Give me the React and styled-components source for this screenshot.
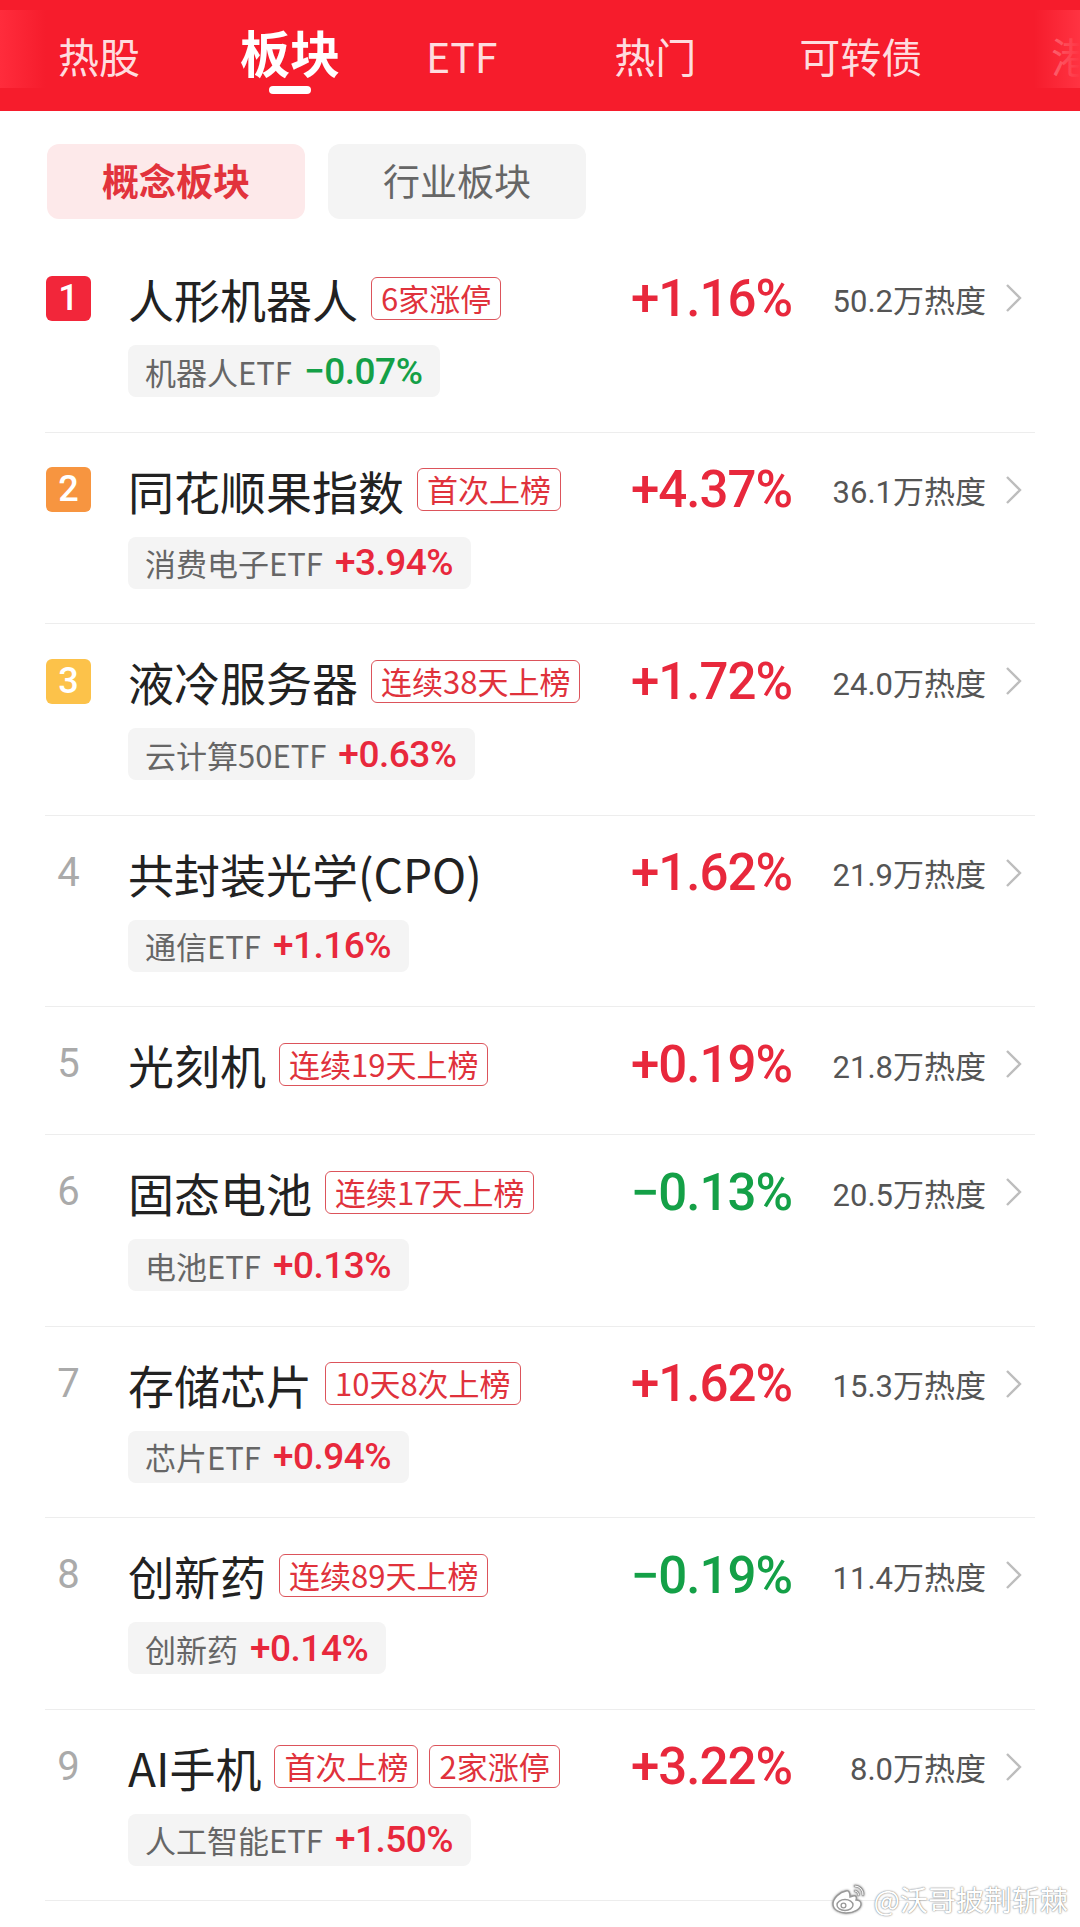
import React from 'react'
import styled, { createGlobalStyle } from 'styled-components';

const GlobalStyle = createGlobalStyle`
  body {
    margin: 0;
    background: #fff;
    font-family: "Noto Sans CJK SC", "Noto Sans", sans-serif;
  }
`;

const Page = styled.div`
  position: relative;
  width: 1080px;
  height: 1927px;
  overflow: hidden;
  background: #fff;
`;

const Header = styled.header`
  position: relative;
  height: 111px;
  box-sizing: border-box;
  background: #f61c2c;
  display: flex;
  align-items: flex-end;
  padding: 0 0 35px 58px;
  &::before, &::after {
    content: '';
    position: absolute;
    top: 10px;
    bottom: 23px;
    width: 46px;
  }
  &::before {
    left: 0;
    background: linear-gradient(90deg, #ff2c3c, rgba(255, 44, 60, 0));
  }
  &::after {
    right: 0;
    background: linear-gradient(270deg, #ff3342, rgba(255, 44, 60, 0));
  }
`;

const Tab = styled.div`
  position: relative;
  flex-shrink: 0;
  line-height: 1;
  white-space: nowrap;
  margin-left: ${p => p.$ml}px;
  font-size: ${p => (p.$active ? 50 : 41)}px;
  font-weight: ${p => (p.$active ? 700 : 400)};
  color: ${p => (p.$active ? '#fff' : p.$faded ? 'rgba(255,255,255,0.45)' : 'rgba(255,240,242,0.92)')};
  &::after {
    content: '';
    display: ${p => (p.$active ? 'block' : 'none')};
    position: absolute;
    left: 50%;
    top: calc(100% + 10px);
    transform: translateX(-50%);
    width: 42px;
    height: 8px;
    border-radius: 4px;
    background: #fff;
  }
`;

const SubTabs = styled.div`
  display: flex;
  gap: 23px;
  padding: 33px 45px 0 47px;
`;

const SubTab = styled.div`
  width: 258px;
  height: 75px;
  box-sizing: border-box;
  padding-bottom: 4px;
  border-radius: 12px;
  display: flex;
  align-items: center;
  justify-content: center;
  font-size: 37px;
  font-weight: ${p => (p.$active ? 700 : 400)};
  color: ${p => (p.$active ? '#e2333c' : '#666')};
  background: ${p => (p.$active ? '#fde9ea' : '#f4f4f4')};
`;

const List = styled.div`
  margin-top: 22px;
  padding: 0 45px;
`;

const Row = styled.div`
  padding: 27px 0 ${p => (p.$chip ? 34.5 : 40)}px;
  border-bottom: 1px solid #ededed;
`;

const TopLine = styled.div`
  display: flex;
  align-items: center;
  height: 60px;
`;

const RankCell = styled.div`
  width: 47px;
  margin-right: 36px;
  display: flex;
  justify-content: center;
  flex-shrink: 0;
`;

const Badge = styled.div`
  width: 45px;
  height: 45px;
  border-radius: 6px;
  background: ${p => p.$bg};
  color: #fff;
  font-family: Roboto, sans-serif;
  font-weight: 500;
  font-size: 36px;
  line-height: 45px;
  text-align: center;
`;

const RankNum = styled.div`
  font-family: Roboto, sans-serif;
  font-size: 40px;
  color: #aaa;
  line-height: 1;
`;

const TitleWrap = styled.div`
  flex: 1;
  display: flex;
  align-items: center;
  min-width: 0;
`;

const Title = styled.div`
  font-size: 46px;
  color: #222;
  line-height: 1;
  white-space: nowrap;
  margin-right: 13px;
`;

const Tag = styled.div`
  height: 43px;
  box-sizing: border-box;
  padding: 0 9px;
  border: 1.5px solid #dc545b;
  border-radius: 6px;
  color: #e0323c;
  font-size: 31px;
  line-height: 40px;
  white-space: nowrap;
  & + & {
    margin-left: 11px;
  }
`;

const Pct = styled.div`
  font-family: Roboto, sans-serif;
  font-weight: 500;
  font-size: 51px;
  letter-spacing: -1px;
  line-height: 1;
  color: ${p => (p.$up ? '#e8283c' : '#14a047')};
  white-space: nowrap;
`;

const Heat = styled.div`
  width: 194px;
  flex-shrink: 0;
  text-align: right;
  font-family: Roboto, "Noto Sans CJK SC", sans-serif;
  font-size: 31px;
  color: #555;
  white-space: nowrap;
`;

const Chevron = styled.svg`
  width: 18px;
  height: 30px;
  margin: 0 12px 0 19px;
  flex-shrink: 0;
`;

const Chip = styled.div`
  display: inline-flex;
  align-items: center;
  height: 52px;
  margin: 17px 0 0 83px;
  padding: 0 18px 0 17px;
  border-radius: 8px;
  background: #f4f4f4;
`;

const ChipLabel = styled.span`
  font-size: 31px;
  color: #666;
`;

const ChipValue = styled.span`
  margin-left: 12px;
  font-family: Roboto, sans-serif;
  font-weight: 500;
  font-size: 37px;
  letter-spacing: -0.5px;
  color: ${p => (p.$up ? '#e8283c' : '#14a047')};
`;

const Watermark = styled.div`
  position: absolute;
  right: 12px;
  bottom: 8px;
  display: flex;
  align-items: center;
  gap: 6px;
  font-size: 28px;
  color: #fff;
  text-shadow: 0 0 2px rgba(0, 0, 0, 0.45), 0 0 1px rgba(0, 0, 0, 0.35);
`;

const tabs = [
  { label: '热股', ml: 0 },
  { label: '板块', ml: 100, active: true },
  { label: 'ETF', ml: 86 },
  { label: '热门', ml: 117 },
  { label: '可转债', ml: 103 },
  { label: '港', ml: 129, faded: true },
];

const badgeColors = { 1: '#f2263a', 2: '#f79540', 3: '#fcc24a' };

const rows = [
  { rank: 1, name: '人形机器人', tags: ['6家涨停'], pct: '+1.16%', heat: '50.2万热度', etf: '机器人ETF', etfPct: '−0.07%' },
  { rank: 2, name: '同花顺果指数', tags: ['首次上榜'], pct: '+4.37%', heat: '36.1万热度', etf: '消费电子ETF', etfPct: '+3.94%' },
  { rank: 3, name: '液冷服务器', tags: ['连续38天上榜'], pct: '+1.72%', heat: '24.0万热度', etf: '云计算50ETF', etfPct: '+0.63%' },
  { rank: 4, name: '共封装光学(CPO)', tags: [], pct: '+1.62%', heat: '21.9万热度', etf: '通信ETF', etfPct: '+1.16%' },
  { rank: 5, name: '光刻机', tags: ['连续19天上榜'], pct: '+0.19%', heat: '21.8万热度' },
  { rank: 6, name: '固态电池', tags: ['连续17天上榜'], pct: '−0.13%', heat: '20.5万热度', etf: '电池ETF', etfPct: '+0.13%' },
  { rank: 7, name: '存储芯片', tags: ['10天8次上榜'], pct: '+1.62%', heat: '15.3万热度', etf: '芯片ETF', etfPct: '+0.94%' },
  { rank: 8, name: '创新药', tags: ['连续89天上榜'], pct: '−0.19%', heat: '11.4万热度', etf: '创新药', etfPct: '+0.14%' },
  { rank: 9, name: 'AI手机', tags: ['首次上榜', '2家涨停'], pct: '+3.22%', heat: '8.0万热度', etf: '人工智能ETF', etfPct: '+1.50%' },
];

const WeiboLogo = () => (
  <svg width="38" height="34" viewBox="0 0 38 34" style={{ filter: 'drop-shadow(0 0 1px rgba(0,0,0,0.5))' }}>
    <path d="M16 9c-6 1-13 7-13 13 0 6 7 9 13 9 8 0 15-4 15-9 0-3-3-4-5-4 1-3 0-5-3-4l-3 1c0-4-1-7-4-6z" fill="#fff" stroke="#999" strokeWidth="1.4" />
    <ellipse cx="15" cy="23" rx="8" ry="5.5" fill="#fff" stroke="#999" strokeWidth="1.4" />
    <circle cx="13.5" cy="23.5" r="2.4" fill="#fff" stroke="#999" strokeWidth="1.3" />
    <path d="M25 4a8 8 0 0 1 8 9" fill="none" stroke="#999" strokeWidth="2.6" strokeLinecap="round" />
    <path d="M25 4a8 8 0 0 1 8 9" fill="none" stroke="#fff" strokeWidth="1" strokeLinecap="round" />
    <path d="M25 9a3.5 3.5 0 0 1 3.5 4" fill="none" stroke="#999" strokeWidth="2.4" strokeLinecap="round" />
    <path d="M25 9a3.5 3.5 0 0 1 3.5 4" fill="none" stroke="#fff" strokeWidth="0.9" strokeLinecap="round" />
  </svg>
);

const App = () => {
  return (
    <Page>
      <GlobalStyle />
      <Header>
        {tabs.map(t => (
          <Tab key={t.label} $ml={t.ml} $active={t.active} $faded={t.faded}>{t.label}</Tab>
        ))}
      </Header>

      <SubTabs>
        <SubTab $active>概念板块</SubTab>
        <SubTab>行业板块</SubTab>
      </SubTabs>

      <List>
        {rows.map(r => (
          <Row key={r.rank} $chip={!!r.etf}>
            <TopLine>
              <RankCell>
                {badgeColors[r.rank]
                  ? <Badge $bg={badgeColors[r.rank]}>{r.rank}</Badge>
                  : <RankNum>{r.rank}</RankNum>}
              </RankCell>
              <TitleWrap>
                <Title>{r.name}</Title>
                {r.tags.map(tag => <Tag key={tag}>{tag}</Tag>)}
              </TitleWrap>
              <Pct $up={r.pct.startsWith('+')}>{r.pct}</Pct>
              <Heat>{r.heat}</Heat>
              <Chevron viewBox="0 0 18 30">
                <polyline points="2,2 15,15 2,28" fill="none" stroke="#bdbdbd" strokeWidth="2.4" />
              </Chevron>
            </TopLine>
            {r.etf && (
              <Chip>
                <ChipLabel>{r.etf}</ChipLabel>
                <ChipValue $up={r.etfPct.startsWith('+')}>{r.etfPct}</ChipValue>
              </Chip>
            )}
          </Row>
        ))}
      </List>

      <Watermark>
        <WeiboLogo />
        @沃哥披荆斩棘
      </Watermark>
    </Page>
  )
}

export default App
